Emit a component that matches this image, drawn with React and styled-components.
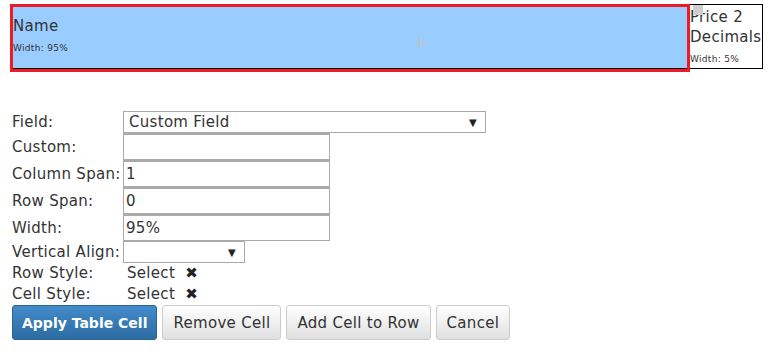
import React from 'react';
import styled, { createGlobalStyle } from 'styled-components';

const GlobalStyle = createGlobalStyle`
  body {
    margin: 0;
    font-family: "DejaVu Sans", Verdana, sans-serif;
    color: #333;
    background: #fff;
  }
`;

const fields = [
  { label: 'Custom:', value: '' },
  { label: 'Column Span:', value: '1' },
  { label: 'Row Span:', value: '0' },
  { label: 'Width:', value: '95%' }
];

const App = () => (
  <Page>
    <GlobalStyle />
    <Preview>
      <MainCell>
        <CellTitle>Name</CellTitle>
        <CellWidth>Width: 95%</CellWidth>
        <Plus>+</Plus>
      </MainCell>
      <SideCell>
        <Handle />
        <CellTitle>Price 2 Decimals</CellTitle>
        <CellWidth>Width: 5%</CellWidth>
      </SideCell>
    </Preview>

    <Form>
      <Label>Field:</Label>
      <Select $width={363}>
        <span>Custom Field</span>
        <Arrow>▼</Arrow>
      </Select>
      {fields.map(f => (
        <React.Fragment key={f.label}>
          <Label>{f.label}</Label>
          <Input defaultValue={f.value} />
        </React.Fragment>
      ))}
      <Label>Vertical Align:</Label>
      <Select $width={122}>
        <span />
        <Arrow>▼</Arrow>
      </Select>
      <Label $short>Row Style:</Label>
      <StylePick>
        Select <Cross>✖</Cross>
      </StylePick>
      <Label $short>Cell Style:</Label>
      <StylePick>
        Select <Cross>✖</Cross>
      </StylePick>
    </Form>

    <Buttons>
      <Button $primary>Apply Table Cell</Button>
      <Button>Remove Cell</Button>
      <Button>Add Cell to Row</Button>
      <Button>Cancel</Button>
    </Buttons>
  </Page>
);

export default App;

const Page = styled.div`
  padding: 4px 0 0 10px;
`;

const Preview = styled.div`
  display: flex;
  width: 753px;
  height: 68px;
`;

const MainCell = styled.div`
  position: relative;
  box-sizing: border-box;
  flex: 0 0 680px;
  height: 68px;
  background: #99ccff;
  border: 3px solid #ed1c24;
  box-shadow: inset 0 -1px 0 #000;
  padding: 9px 0 0 0;
`;

const SideCell = styled.div`
  position: relative;
  box-sizing: border-box;
  flex: 0 0 73px;
  height: 65px;
  border: 1px solid #000;
  border-left: none;
  padding: 2px 0 0 0;
`;

const Handle = styled.div`
  position: absolute;
  left: 3px;
  top: 0;
  width: 10px;
  height: 10px;
  background: #cfcfcf;
`;

const CellTitle = styled.div`
  font-size: 15px;
  line-height: 20px;
  letter-spacing: 0.3px;
  color: #333;
`;

const CellWidth = styled.div`
  font-size: 9px;
  line-height: 12px;
  letter-spacing: 0.3px;
  margin-top: 6px;
  color: #333;
`;

const Plus = styled.div`
  position: absolute;
  left: 400px;
  top: 27px;
  font-size: 17px;
  line-height: 17px;
  color: #c4c4c4;
`;

const Form = styled.div`
  display: grid;
  grid-template-columns: 111px auto;
  justify-items: start;
  align-items: center;
  margin-top: 39px;
  margin-left: 2px;
  font-size: 15px;
  letter-spacing: 0.3px;
`;

const Label = styled.div`
  line-height: ${p => (p.$short ? '21px' : '20px')};
  white-space: nowrap;
`;

const Select = styled.div`
  box-sizing: border-box;
  display: flex;
  align-items: center;
  justify-content: space-between;
  width: ${p => p.$width}px;
  height: 22px;
  border: 1px solid #aaa;
  padding: 0 8px 0 5px;
  color: #333;
`;

const Arrow = styled.span`
  font-size: 10px;
  color: #222;
`;

const Input = styled.input`
  box-sizing: border-box;
  width: 207px;
  height: 27px;
  border: 1px solid #aaa;
  border-top-width: 2px;
  padding: 0 2px;
  margin: 0;
  font-family: inherit;
  font-size: 15px;
  letter-spacing: 0.3px;
  color: #333;
  outline: none;
`;

const StylePick = styled.div`
  line-height: 21px;
  padding-left: 4px;
`;

const Cross = styled.span`
  font-size: 15px;
  margin-left: 5px;
  color: #222;
`;

const Buttons = styled.div`
  display: flex;
  gap: 5px;
  margin-left: 2px;
`;

const Button = styled.button`
  box-sizing: border-box;
  height: 35px;
  padding: 0 ${p => (p.$primary ? '9px' : '10px')};
  font-family: inherit;
  font-size: ${p => (p.$primary ? '14px' : '15px')};
  letter-spacing: ${p => (p.$primary ? '0' : '0.3px')};
  border-radius: 3px;
  cursor: pointer;
  color: ${p => (p.$primary ? '#fff' : '#333')};
  font-weight: ${p => (p.$primary ? 'bold' : 'normal')};
  border: 1px solid ${p => (p.$primary ? '#2a6496' : '#ccc')};
  background: ${p =>
    p.$primary
      ? 'linear-gradient(#428bca, #2d6ca2)'
      : 'linear-gradient(#fff, #e0e0e0)'};
`;
